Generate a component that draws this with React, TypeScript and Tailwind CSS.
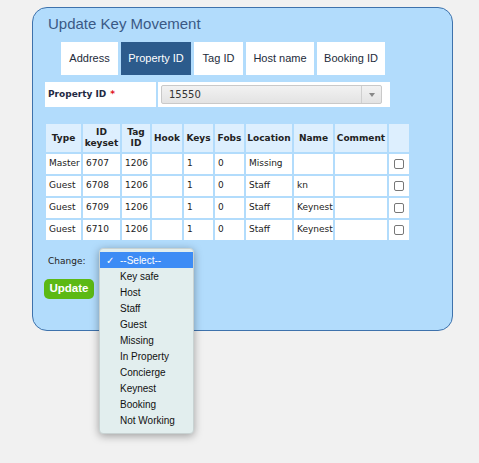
import React from 'react';

const cols = [
  { label: 'Type', w: 'w-[37px]' },
  { label: 'ID keyset', w: 'w-[39px]' },
  { label: 'Tag ID', w: 'w-[30px]' },
  { label: 'Hook', w: 'w-[32px]' },
  { label: 'Keys', w: 'w-[31px]' },
  { label: 'Fobs', w: 'w-[31px]' },
  { label: 'Location', w: 'w-[48px]' },
  { label: 'Name', w: 'w-[41px]' },
  { label: 'Comment', w: 'w-[54px]' },
  { label: '', w: 'w-[22px]' },
];

const rows = [
  ['Master', '6707', '1206', '', '1', '0', 'Missing', ''],
  ['Guest', '6708', '1206', '', '1', '0', 'Staff', 'kn'],
  ['Guest', '6709', '1206', '', '1', '0', 'Staff', 'Keynest'],
  ['Guest', '6710', '1206', '', '1', '0', 'Staff', 'Keynest'],
];

const tabs = ['Address', 'Property ID', 'Tag ID', 'Host name', 'Booking ID'];
const tabWidths = ['w-[57px]', 'w-[70px]', 'w-[49px]', 'w-[68px]', 'w-[68px]'];

const options = [
  'Key safe',
  'Host',
  'Staff',
  'Guest',
  'Missing',
  'In Property',
  'Concierge',
  'Keynest',
  'Booking',
  'Not Working',
];

export default function App() {
  return (
    <div className="w-[479px] h-[463px] bg-[#f1f1f1] pt-[7px] pl-[32px] font-['DejaVu_Sans',sans-serif]">
      <div className="relative w-[421px] h-[324px] bg-[#b2dcfc] border border-[#3e72ac] rounded-[15px] pl-[12px] pt-[7px]">
        {/* titre */}
        <h1 className="pl-[3px] text-[15px] leading-[18px] text-[#3a5985] font-['Liberation_Sans',sans-serif]">
          Update Key Movement
        </h1>

        {/* onglets */}
        <div className="flex gap-[3px] mt-[9px] ml-[16px] font-['Liberation_Sans',sans-serif] text-[11px]">
          {tabs.map((t, i) => (
            <div
              key={t}
              className={`${tabWidths[i]} h-[33px] flex items-center justify-center ${
                i === 1 ? 'bg-[#2c5b8c] text-white' : 'bg-white text-[#1d2b3a]'
              }`}
            >
              {t}
            </div>
          ))}
        </div>

        {/* champ property id */}
        <div className="flex gap-[2px] mt-[7px] h-[25px]">
          <div className="w-[111px] bg-white flex items-center pl-[3px] text-[9px] font-bold text-[#1f2a44]">
            Property ID <span className="text-[#e0141e] ml-[4px]">*</span>
          </div>
          <div className="w-[232px] bg-white flex items-center pl-[3px]">
            <div className="w-[221px] h-[19px] border border-[#c9c9c9] rounded-[2px] bg-gradient-to-b from-[#f2f2f2] to-[#e3e3e3] flex items-center">
              <span className="flex-1 pl-[7px] text-[10px] text-[#333]">15550</span>
              <div className="w-[20px] h-full border-l border-[#cfcfcf] flex items-center justify-center">
                <svg width="6" height="4" viewBox="0 0 6 4">
                  <path d="M0 0h6L3 4z" fill="#888" />
                </svg>
              </div>
            </div>
          </div>
        </div>

        {/* tableau */}
        <table className="mt-[15px] -ml-[1px] w-[365px] table-fixed border-collapse text-[9px] text-[#222]">
          <thead>
            <tr className="h-[30px] bg-[#ddeffe]">
              {cols.map((c, i) => (
                <th
                  key={i}
                  className={`${c.w} border-2 border-[#b2dcfc] font-bold text-[9px] leading-[11px] p-0`}
                >
                  {c.label.split(' ').map((p, j) => (
                    <div key={j}>{p}</div>
                  ))}
                </th>
              ))}
            </tr>
          </thead>
          <tbody>
            {rows.map((r, i) => (
              <tr key={i} className="h-[22px] bg-white">
                {r.map((v, j) => (
                  <td key={j} className="border-2 border-[#b2dcfc] pl-[3px] whitespace-nowrap overflow-hidden">
                    {v}
                  </td>
                ))}
                <td className="border-2 border-[#b2dcfc]"></td>
                <td className="border-2 border-[#b2dcfc]">
                  <div className="w-[10px] h-[10px] border border-[#777] rounded-[2px] bg-white mx-auto"></div>
                </td>
              </tr>
            ))}
          </tbody>
        </table>

        {/* changement */}
        <div className="relative mt-[13px]">
          <div className="pl-[3px] text-[9px] text-[#222] h-[14px] flex items-center">Change:</div>
          <button className="mt-[10px] -ml-[1px] w-[50px] h-[20px] rounded-[5px] bg-[#5cb914] text-white text-[11.5px] font-bold font-['Liberation_Sans',sans-serif]">
            Update
          </button>

          {/* menu déroulant ouvert */}
          <div className="absolute left-[54px] -top-[7px] w-[95px] bg-[#e2eeee] rounded-[4px] shadow-[0_2px_8px_rgba(0,0,0,0.35)] border border-[#c8d2d2] pt-[3px] pb-[5px] font-['Liberation_Sans',sans-serif] text-[10px] text-[#111] z-10">
            <div className="h-[16px] bg-[#3d8cf5] text-white flex items-center">
              <span className="w-[20px] text-center text-[10px]">✓</span>
              <span>--Select--</span>
            </div>
            {options.map((o) => (
              <div key={o} className="h-[16px] flex items-center pl-[20px]">
                {o}
              </div>
            ))}
          </div>
        </div>
      </div>
    </div>
  );
}
